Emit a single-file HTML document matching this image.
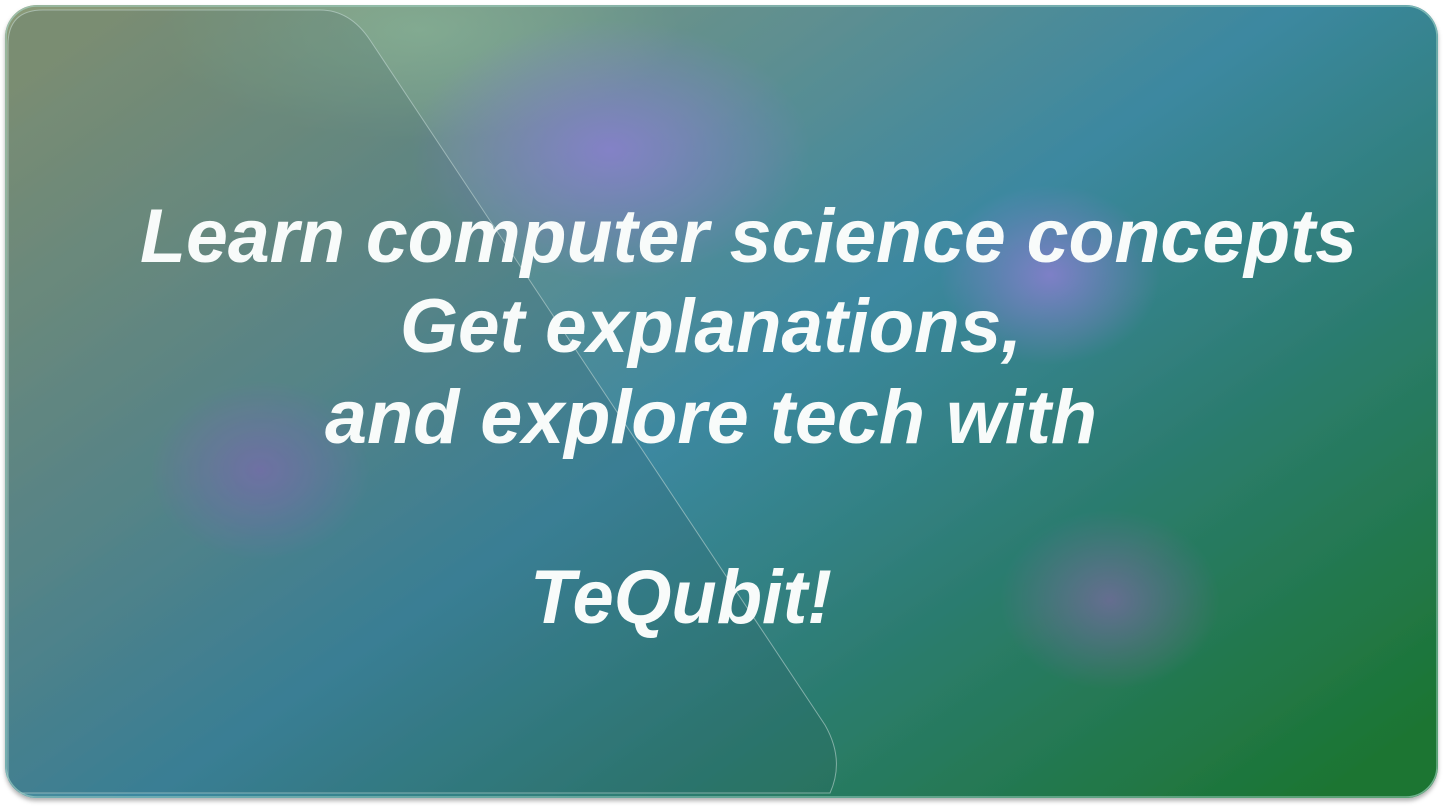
<!DOCTYPE html>
<html><head><meta charset="utf-8"><style>
html,body{margin:0;padding:0;width:1446px;height:806px;background:#fff;overflow:hidden}
</style></head><body>
<svg width="1446" height="806" viewBox="0 0 1446 806" xmlns="http://www.w3.org/2000/svg">
<defs>
<linearGradient id="bg" x1="0" y1="0.1" x2="1" y2="0.9">
<stop offset="0" stop-color="#8a9a78"/>
<stop offset="0.3" stop-color="#5f8f90"/>
<stop offset="0.5" stop-color="#3c88a0"/>
<stop offset="0.72" stop-color="#2c7c70"/>
<stop offset="1" stop-color="#1c7532"/>
</linearGradient>
<radialGradient id="mint" cx="0.5" cy="0.5" r="0.5"><stop offset="0" stop-color="#8ab89a" stop-opacity="0.6"/><stop offset="1" stop-color="#8ab89a" stop-opacity="0"/></radialGradient>
<radialGradient id="p1"><stop offset="0" stop-color="#8a7fd0" stop-opacity="0.85"/><stop offset="1" stop-color="#8a7fd0" stop-opacity="0"/></radialGradient>
<radialGradient id="p2"><stop offset="0" stop-color="#8c6fc0" stop-opacity="0.7"/><stop offset="1" stop-color="#8c6fc0" stop-opacity="0"/></radialGradient>
<radialGradient id="p3"><stop offset="0" stop-color="#7a6aa0" stop-opacity="0.75"/><stop offset="1" stop-color="#7a6aa0" stop-opacity="0"/></radialGradient>
<filter id="sh" x="-5%" y="-5%" width="110%" height="115%"><feDropShadow dx="0" dy="3" stdDeviation="2" flood-color="#000" flood-opacity="0.3"/></filter>
<clipPath id="card"><rect x="5" y="5" width="1433" height="793" rx="32"/></clipPath>
</defs>
<rect x="5" y="5" width="1433" height="793" rx="32" fill="url(#bg)" filter="url(#sh)"/>
<g clip-path="url(#card)">
<ellipse cx="420" cy="30" rx="260" ry="110" fill="url(#mint)"/>
<ellipse cx="610" cy="150" rx="200" ry="130" fill="url(#p1)"/>
<ellipse cx="1050" cy="275" rx="110" ry="90" fill="url(#p1)"/>
<ellipse cx="260" cy="470" rx="110" ry="90" fill="url(#p2)"/>
<ellipse cx="1110" cy="600" rx="110" ry="90" fill="url(#p3)"/>
<path d="M8 793 L8 45 Q8 10 43 10 L320 10 Q350 10 370 40 L825 725 Q845 760 830 793 Z" fill="#2a4a58" fill-opacity="0.16" stroke="#c8dcd8" stroke-opacity="0.55" stroke-width="1"/>
</g>
<rect x="6" y="6" width="1431" height="791" rx="31" fill="none" stroke="#a8d8cc" stroke-opacity="0.6" stroke-width="1.5"/>
<g font-family="Liberation Sans, sans-serif" font-weight="bold" font-style="italic" font-size="76" fill="#f8fbfa">
<text x="140" y="262" textLength="1217" lengthAdjust="spacingAndGlyphs">Learn computer science concepts</text>
<text x="400" y="352" textLength="622" lengthAdjust="spacingAndGlyphs">Get explanations,</text>
<text x="325" y="443" textLength="772" lengthAdjust="spacingAndGlyphs">and explore tech with</text>
<text x="530" y="623" textLength="302" lengthAdjust="spacingAndGlyphs">TeQubit!</text>
</g>
</svg>
</body></html>
